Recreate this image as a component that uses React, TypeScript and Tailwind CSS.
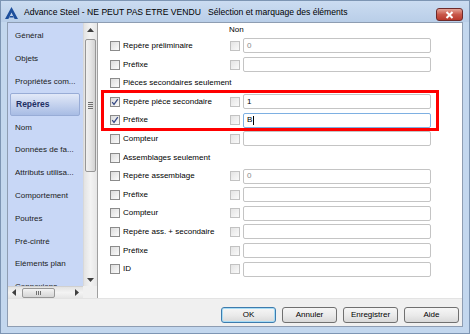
const navItems = [
  "Général",
  "Objets",
  "Propriétés com...",
  "Repères",
  "Nom",
  "Données de fa...",
  "Attributs utilisa...",
  "Comportement",
  "Poutres",
  "Pré-cintré",
  "Eléments plan",
  "Connexions",
]

type Row = { label: string; checked?: boolean; field?: boolean; value?: string; muted?: boolean; focus?: boolean }

const rows: Row[] = [
  { label: "Repère préliminaire", field: true, value: "0", muted: true },
  { label: "Préfixe", field: true },
  { label: "Pièces secondaires seulement" },
  { label: "Repère piéce secondaire", checked: true, field: true, value: "1" },
  { label: "Préfixe", checked: true, field: true, value: "B", focus: true },
  { label: "Compteur", field: true },
  { label: "Assemblages seulement" },
  { label: "Repère assemblage", field: true, value: "0", muted: true },
  { label: "Préfixe", field: true },
  { label: "Compteur", field: true },
  { label: "Repère ass. + secondaire", field: true },
  { label: "Préfixe", field: true },
  { label: "ID", field: true },
]

function Check({ checked, disabled }: { checked?: boolean; disabled?: boolean }) {
  return (
    <span
      className={
        disabled
          ? "w-[10px] h-[10px] shrink-0 border border-[#c2c2c2] bg-gradient-to-br from-[#e4e4e4] to-[#fafafa] flex items-center justify-center"
          : "w-[10px] h-[10px] shrink-0 border border-[#8b8b8b] bg-gradient-to-br from-[#dcdcdc] to-[#fbfbfb] flex items-center justify-center"
      }
    >
      {checked && (
        <svg width="8" height="8" viewBox="0 0 8 8">
          <path d="M1.2 4.2 L3 6.4 L6.8 1.2" fill="none" stroke="#3a4d87" strokeWidth="1.3" />
        </svg>
      )}
    </span>
  )
}

function Btn({ label, primary }: { label: string; primary?: boolean }) {
  return (
    <div
      className={
        "w-[55px] h-[16px] rounded-[3px] border bg-gradient-to-b from-[#f6f6f6] via-[#ebebeb] to-[#d9d9d9] flex items-center justify-center text-[8px] text-black " +
        (primary ? "border-[#3d7bad] shadow-[inset_0_0_0_1px_#a7dcf5]" : "border-[#707070]")
      }
    >
      {label}
    </div>
  )
}

export default function App() {
  return (
    <div className="w-[470px] h-[334px] flex flex-col bg-[#c3d7ee] border border-[#7d95b3] font-['Liberation_Sans',Arial,sans-serif] text-black overflow-hidden">
      {/* title bar */}
      <div className="h-[21px] shrink-0 flex items-center bg-gradient-to-b from-[#cbdcf1] to-[#b9cee8] relative">
        <svg width="13" height="12" viewBox="0 0 13 12" className="ml-[4px] mt-[2px]">
          <path d="M6.5 0 L13 12 L9.6 12 L6.5 5.6 L3.4 12 L0 12 Z" fill="#1d4f9c" />
          <path d="M5 9 L8 9 L8.8 10.6 L4.2 10.6 Z" fill="#1d4f9c" />
        </svg>
        <span className="ml-[6px] mt-[1px] text-[8.6px] whitespace-pre">
          Advance Steel - NE PEUT PAS ETRE VENDU   Sélection et marquage des éléments
        </span>
        <div className="absolute right-[6px] top-[7px] w-[27px] h-[13px] rounded-[3px] border border-[#6e2a2a] bg-gradient-to-b from-[#e4a397] via-[#c8574a] to-[#b8382b] flex items-center justify-center">
          <svg width="9" height="8" viewBox="0 0 9 8">
            <path d="M1.5 1 L7.5 7 M7.5 1 L1.5 7" stroke="#fff" strokeWidth="2" />
          </svg>
        </div>
      </div>

      {/* frame + client */}
      <div className="flex-1 px-[6px] pb-[6px] flex">
        <div className="flex-1 flex flex-col border border-[#8e9db2] bg-[#f0f0f0]">
          <div className="h-[275px] flex">
            {/* nav */}
            <div className="w-[90px] flex flex-col border-r border-[#a0a0a0]">
              <div className="h-[263px] flex">
                <div className="w-[75px] bg-[#c8d7f6] pt-[2px] pl-[2px] overflow-hidden">
                  {navItems.map((n) =>
                    n === "Repères" ? (
                      <div
                        key={n}
                        className="h-[22.8px] w-[70px] flex items-center pl-[5px] text-[8.5px] font-bold text-[#1d2f64] rounded-[2px] border border-[#98acd6] bg-gradient-to-b from-[#e2e9f8] to-[#a8bce4]"
                      >
                        {n}
                      </div>
                    ) : (
                      <div key={n} className="h-[22.8px] flex items-center pl-[5px] text-[8px] text-[#1b1b22] whitespace-nowrap">
                        {n}
                      </div>
                    ),
                  )}
                </div>
                {/* vertical scrollbar */}
                <div className="w-[14px] flex flex-col bg-gradient-to-r from-[#e3e3e3] via-[#f3f3f3] to-[#e6e6e6] border-l border-[#d8d8d8]">
                  <div className="h-[14px] flex items-center justify-center">
                    <svg width="7" height="4" viewBox="0 0 7 4">
                      <path d="M0 4 L3.5 0 L7 4 Z" fill="#3f3f3f" />
                    </svg>
                  </div>
                  <div className="h-[2px]" />
                  <div className="mx-[1px] h-[133px] rounded-[2px] border border-[#979797] bg-gradient-to-r from-[#f1f1f1] via-[#e6e6e6] to-[#d3d3d3] flex items-center justify-center">
                    <div className="flex flex-col gap-[1px]">
                      <span className="w-[5px] h-[1px] bg-[#707070]" />
                      <span className="w-[5px] h-[1px] bg-[#707070]" />
                      <span className="w-[5px] h-[1px] bg-[#707070]" />
                      <span className="w-[5px] h-[1px] bg-[#707070]" />
                    </div>
                  </div>
                  <div className="flex-1" />
                  <div className="h-[12px] flex items-center justify-center">
                    <svg width="7" height="4" viewBox="0 0 7 4">
                      <path d="M0 0 L3.5 4 L7 0 Z" fill="#3f3f3f" />
                    </svg>
                  </div>
                </div>
              </div>
              {/* horizontal scrollbar */}
              <div className="h-[12px] flex">
                <div className="w-[75px] flex items-center bg-gradient-to-b from-[#e3e3e3] via-[#f3f3f3] to-[#e6e6e6] border-t border-[#d0d0d0]">
                  <div className="w-[12px] flex items-center justify-center">
                    <svg width="4" height="7" viewBox="0 0 4 7">
                      <path d="M4 0 L0 3.5 L4 7 Z" fill="#3f3f3f" />
                    </svg>
                  </div>
                  <div className="ml-[2px] w-[33px] h-[10px] rounded-[2px] border border-[#979797] bg-gradient-to-b from-[#f3f3f3] to-[#d5d5d5] flex items-center justify-center gap-[1px]">
                    <span className="w-[1px] h-[4px] bg-[#707070]" />
                    <span className="w-[1px] h-[4px] bg-[#707070]" />
                    <span className="w-[1px] h-[4px] bg-[#707070]" />
                  </div>
                  <div className="flex-1" />
                  <div className="w-[12px] flex items-center justify-center">
                    <svg width="4" height="7" viewBox="0 0 4 7">
                      <path d="M0 0 L4 3.5 L0 7 Z" fill="#3f3f3f" />
                    </svg>
                  </div>
                </div>
                <div className="flex-1 bg-[#f0f0f0]" />
              </div>
            </div>

            {/* main panel */}
            <div className="flex-1 bg-white relative">
              <div className="h-[13.7px] flex items-center pl-[131px] text-[8px]">Non</div>
              {rows.map((r, i) => (
                <div key={i} className="h-[18.6px] flex items-center pl-[12px]">
                  <div className="w-[120px] flex items-center gap-[3px]">
                    <Check checked={r.checked} />
                    <span className="text-[8px] whitespace-nowrap">{r.label}</span>
                  </div>
                  {r.field && (
                    <>
                      <Check disabled />
                      <div
                        className={
                          "ml-[3px] w-[188px] h-[15px] rounded-[2px] border flex items-center pl-[3px] text-[8px] " +
                          (r.focus ? "border-[#7eb0e2]" : "border-[#c4c4c4]") +
                          (r.muted ? " text-[#8a8a8a]" : " text-black")
                        }
                      >
                        {r.value}
                        {r.focus && <span className="ml-[1px] w-[1px] h-[9px] bg-black" />}
                      </div>
                    </>
                  )}
                </div>
              ))}
              <div className="absolute left-[3px] top-[67px] w-[338px] h-[41px] border-[3px] border-[#ff0000] pointer-events-none" />
            </div>
          </div>

          {/* buttons */}
          <div className="flex-1 flex justify-end items-start pt-[8px] pr-[3px] gap-[6px] border-t border-[#e3e3e3]">
            <Btn label="OK" primary />
            <Btn label="Annuler" />
            <Btn label="Enregistrer" />
            <Btn label="Aide" />
          </div>
        </div>
      </div>
    </div>
  )
}
